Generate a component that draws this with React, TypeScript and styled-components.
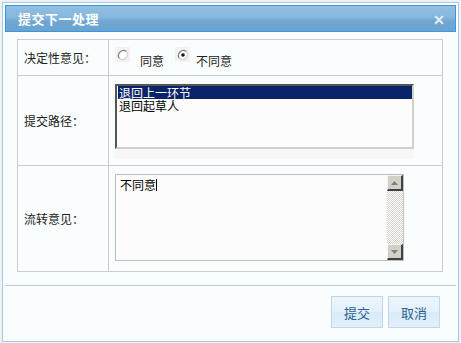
import React from "react";
import styled, { createGlobalStyle } from "styled-components";

const GlobalStyle = createGlobalStyle`
  html, body {
    margin: 0;
    padding: 0;
    background: #eef1f5;
    font-family: "Noto Sans CJK SC", "Noto Sans", sans-serif;
    font-size: 12px;
    color: #222;
  }
`;

const Dialog = styled.div`
  box-sizing: border-box;
  width: 457px;
  height: 340px;
  margin: 2px 0 0 2px;
  border: 1px solid #a8cae5;
  background: #fafdfd;
  padding: 2px;
  display: flex;
  flex-direction: column;
`;

const TitleBar = styled.div`
  box-sizing: border-box;
  height: 27px;
  border: 1px solid #3f95dd;
  background: linear-gradient(to bottom, #92bfe2 0%, #85b7de 45%, #6fa7d2 60%, #6ba4d0 100%);
  display: flex;
  align-items: center;
  justify-content: space-between;
  padding: 0 10px 0 12px;
`;

const Title = styled.span`
  color: #fff;
  font-weight: bold;
  font-size: 13px;
  letter-spacing: 0.5px;
`;

const Close = styled.span`
  color: #e4eef7;
  font-weight: bold;
  font-size: 14px;
  line-height: 1;
`;

const Body = styled.div`
  padding: 7px 11px 0 12px;
`;

const FormTable = styled.table`
  width: 426px;
  border-collapse: collapse;
  td {
    border: 1px solid #cccccc;
    padding: 0;
  }
`;

const Label = styled.td<{ $h: number }>`
  width: 84px;
  height: ${(p) => p.$h - 1}px;
  padding-left: 6px !important;
  vertical-align: middle;
  color: #222;
`;

const Cell = styled.td<{ $pt: number }>`
  vertical-align: top;
  padding: ${(p) => p.$pt}px 0 0 6px !important;
`;

const RadioRow = styled.div`
  display: flex;
  align-items: flex-start;
  height: 30px;
`;

const RadioBox = styled.span`
  width: 15px;
  height: 15px;
  background: #f3f3f3;
  display: flex;
  align-items: center;
  justify-content: center;
  margin-top: 2px;
`;

const RadioText = styled.span<{ $ml: number }>`
  margin: 9px 11px 0 ${(p) => p.$ml}px;
  line-height: 14px;
`;

const Radio = ({ checked }: { checked?: boolean }) => (
  <RadioBox>
    <svg width="12" height="12" viewBox="0 0 12 12">
      <circle cx="6" cy="6" r="5" fill="#fff" />
      <path d="M2.5 9.5 A5 5 0 0 1 9.5 2.5" fill="none" stroke="#808080" strokeWidth="1.2" />
      <path d="M9.5 2.5 A5 5 0 0 1 2.5 9.5" fill="none" stroke="#d8d4cc" strokeWidth="1.2" />
      {checked && <circle cx="6" cy="6" r="1.8" fill="#111" />}
    </svg>
  </RadioBox>
);

const ListWrap = styled.div`
  width: 299px;
  background: #f7f7f7;
  padding-bottom: 10px;
`;

const ListBox = styled.div`
  box-sizing: border-box;
  height: 65px;
  background: #fcfcfc;
  border-style: solid;
  border-width: 2px;
  border-color: #555 #d4d0c8 #d4d0c8 #555;
  padding: 0 0 0 1px;
`;

const ListItem = styled.div<{ $selected?: boolean }>`
  height: 13px;
  line-height: 13px;
  font-size: 12px;
  padding-left: 1px;
  background: ${(p) => (p.$selected ? "#0a246a" : "transparent")};
  color: ${(p) => (p.$selected ? "#fff" : "#000")};
`;

const TextBox = styled.div`
  box-sizing: border-box;
  width: 289px;
  height: 87px;
  border: 1px solid #bfbfbf;
  background: #fcfcfc;
  display: flex;
`;

const TextArea = styled.div`
  flex: 1;
  padding: 3px 0 0 4px;
  color: #000;
  line-height: 14px;
`;

const Caret = styled.span`
  display: inline-block;
  width: 1px;
  height: 12px;
  background: #000;
  vertical-align: -1px;
`;

const ScrollBar = styled.div`
  width: 16px;
  display: flex;
  flex-direction: column;
  background: repeating-conic-gradient(#d4d0c8 0 25%, #ffffff 0 50%) 0 0 / 2px 2px;
`;

const ScrollBtn = styled.div`
  box-sizing: border-box;
  width: 16px;
  height: 16px;
  background: #d4d0c8;
  border-style: solid;
  border-width: 1px 2px 2px 1px;
  border-color: #f4f4f4 #404040 #404040 #f4f4f4;
  display: flex;
  align-items: center;
  justify-content: center;
`;

const Track = styled.div`
  flex: 1;
`;

const Arrow = ({ up }: { up?: boolean }) => (
  <svg width="7" height="4" viewBox="0 0 7 4">
    <path d={up ? "M0 4 L3.5 0 L7 4 Z" : "M0 0 L3.5 4 L7 0 Z"} fill="#808080" />
  </svg>
);

const Footer = styled.div`
  margin-top: 13px;
  border-top: 1px solid #b3d0e6;
  display: flex;
  justify-content: flex-end;
  gap: 5px;
  padding: 10px 16px 0 0;
`;

const Button = styled.button`
  box-sizing: border-box;
  width: 52px;
  height: 32px;
  border: 1px solid #bcd7ee;
  background: linear-gradient(to bottom, #ecf5fd 0%, #e4f0fb 50%, #d9ebf9 52%, #e3f0fb 100%);
  color: #2c6293;
  font-family: "Noto Sans CJK SC", "Noto Sans", sans-serif;
  font-size: 13px;
  padding: 0;
`;

export default function App() {
  return (
    <>
      <GlobalStyle />
      <Dialog>
        <TitleBar>
          <Title>提交下一处理</Title>
          <Close>✕</Close>
        </TitleBar>
        <Body>
          <FormTable>
            <tbody>
              <tr>
                <Label $h={35}>决定性意见：</Label>
                <Cell $pt={5}>
                  <RadioRow>
                    <Radio />
                    <RadioText $ml={10}>同意</RadioText>
                    <Radio checked />
                    <RadioText $ml={6}>不同意</RadioText>
                  </RadioRow>
                </Cell>
              </tr>
              <tr>
                <Label $h={90}>提交路径：</Label>
                <Cell $pt={8}>
                  <ListWrap>
                    <ListBox>
                      <ListItem $selected>退回上一环节</ListItem>
                      <ListItem>退回起草人</ListItem>
                    </ListBox>
                  </ListWrap>
                </Cell>
              </tr>
              <tr>
                <Label $h={106}>流转意见：</Label>
                <Cell $pt={8}>
                  <TextBox>
                    <TextArea>
                      不同意<Caret />
                    </TextArea>
                    <ScrollBar>
                      <ScrollBtn>
                        <Arrow up />
                      </ScrollBtn>
                      <Track />
                      <ScrollBtn>
                        <Arrow />
                      </ScrollBtn>
                    </ScrollBar>
                  </TextBox>
                </Cell>
              </tr>
            </tbody>
          </FormTable>
        </Body>
        <Footer>
          <Button>提交</Button>
          <Button>取消</Button>
        </Footer>
      </Dialog>
    </>
  );
}
